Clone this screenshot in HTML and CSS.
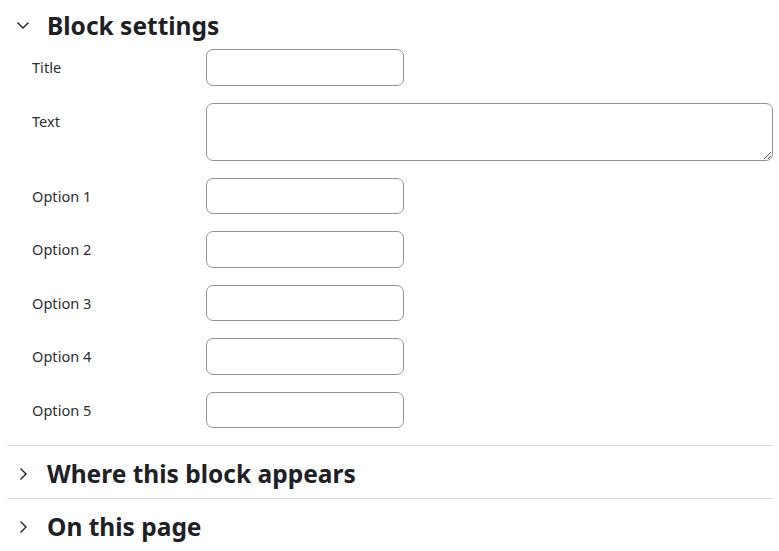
FILE: index.html
```html
<!DOCTYPE html>
<html lang="en">
<head>
<meta charset="utf-8">
<title>Block settings</title>
<link rel="stylesheet" href="styles.css">
</head>
<body>
<div class="page">
  <section class="section first">
    <div class="section-head">
      <svg class="chev" width="14" height="14" viewBox="0 0 14 14"><polyline points="1.5,4.5 7,10 12.5,4.5" fill="none" stroke="#1d2125" stroke-width="1.4"/></svg>
      <h3 class="section-title">Block settings</h3>
    </div>
    <div class="form">
      <div class="row"><label class="lbl">Title</label><input class="field" type="text"></div>
      <div class="row"><label class="lbl">Text</label><textarea class="field area"></textarea></div>
      <div class="row"><label class="lbl">Option 1</label><input class="field" type="text"></div>
      <div class="row"><label class="lbl">Option 2</label><input class="field" type="text"></div>
      <div class="row"><label class="lbl">Option 3</label><input class="field" type="text"></div>
      <div class="row"><label class="lbl">Option 4</label><input class="field" type="text"></div>
      <div class="row"><label class="lbl">Option 5</label><input class="field" type="text"></div>
    </div>
  </section>
  <section class="section">
    <div class="section-head">
      <svg class="chev" width="14" height="14" viewBox="0 0 14 14"><polyline points="4.5,1.5 10,7 4.5,12.5" fill="none" stroke="#1d2125" stroke-width="1.4"/></svg>
      <h3 class="section-title">Where this block appears</h3>
    </div>
  </section>
  <section class="section">
    <div class="section-head">
      <svg class="chev" width="14" height="14" viewBox="0 0 14 14"><polyline points="4.5,1.5 10,7 4.5,12.5" fill="none" stroke="#1d2125" stroke-width="1.4"/></svg>
      <h3 class="section-title">On this page</h3>
    </div>
  </section>
</div>
</body>
</html>
```
FILE: styles.css
```css
html, body {
  margin: 0;
  padding: 0;
  background: #ffffff;
}
body {
  font-family: "Noto Sans", "Open Sans", sans-serif;
  font-size: 15px;
  color: #1d2125;
}
.page {
  padding: 0 6px 0 7px;
}
.section {
  border-top: 1px solid #dee2e6;
}
.section.first {
  border-top: none;
  padding-bottom: 16.5px;
}
.section-head {
  display: flex;
  align-items: center;
  gap: 17px;
  padding: 14.5px 0 10.5px 9px;
  height: 27px;
}
.section.first .section-head {
  padding-top: 11.5px;
}
.chev {
  flex: none;
  display: block;
}
.section-title {
  margin: 0;
  font-size: 24.5px;
  line-height: 27px;
  font-weight: 700;
}
.form {
  display: flex;
  flex-direction: column;
  gap: 17px;
}
.row {
  display: grid;
  grid-template-columns: 174px 1fr;
  padding-left: 25px;
  align-items: start;
}
.lbl {
  padding-top: 7px;
  line-height: 22.5px;
  font-size: 14.6px;
  color: #2b2f33;
}
.field {
  box-sizing: border-box;
  width: 198px;
  height: 36.5px;
  border: 1px solid #8f959e;
  border-radius: 7px;
  background: #fff;
  font: inherit;
  padding: 6px 12px;
  margin: 0;
}
.area {
  width: 567px;
  height: 58px;
  display: block;
}
```
